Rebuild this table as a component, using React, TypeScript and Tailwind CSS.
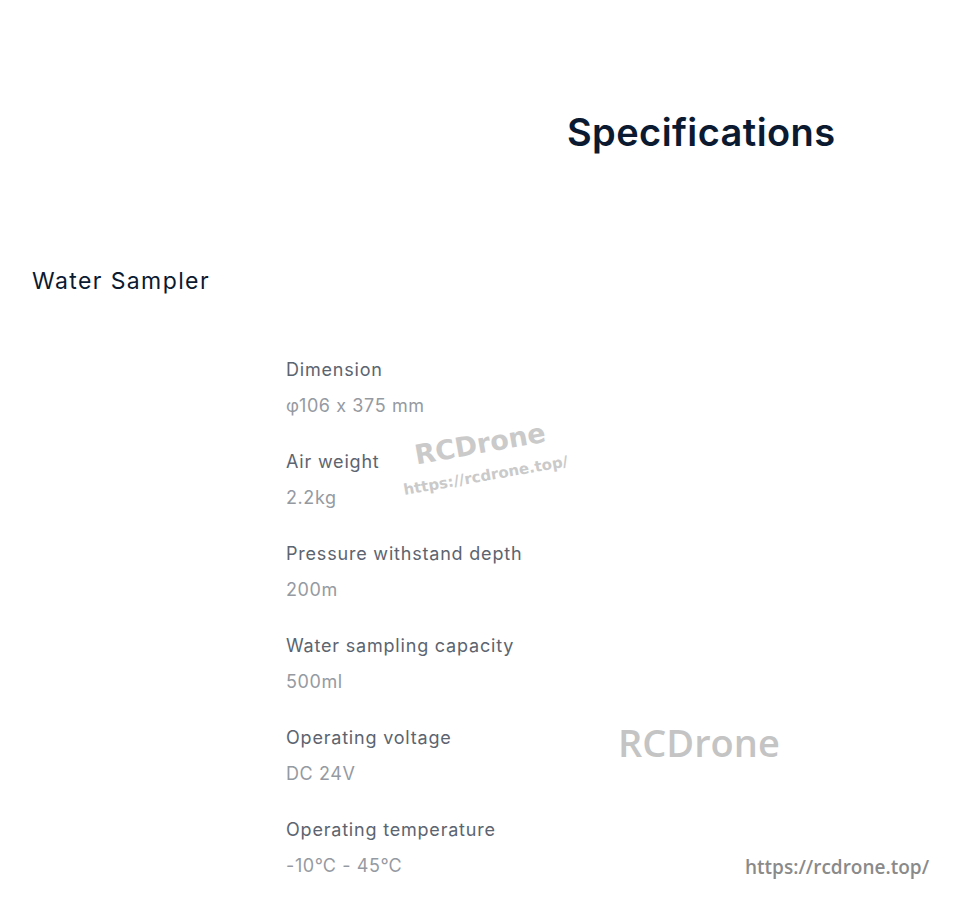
const specs = [
  { label: 'Dimension', value: 'φ106 x 375 mm' },
  { label: 'Air weight', value: '2.2kg' },
  { label: 'Pressure withstand depth', value: '200m' },
  { label: 'Water sampling capacity', value: '500ml' },
  { label: 'Operating voltage', value: 'DC 24V' },
  { label: 'Operating temperature', value: '-10℃ - 45℃' },
];

export default function App() {
  return (
    <div className="relative min-h-[912px] w-[962px] bg-white font-['Inter',sans-serif]">
      {/* heading */}
      <div className="grid grid-cols-2 pt-[104px]">
        <div />
        <h1 className="pl-[86px] text-[38px] font-semibold leading-[56px] tracking-[0.4px] text-[#0b1a30]">
          Specifications
        </h1>
      </div>

      <div className="pl-8 pt-[105px] text-[23px] leading-[32px] tracking-[1.4px] text-[#0b1a30]">Water Sampler</div>

      <div className="flex flex-col gap-[30px] pl-[286px] pt-[60px]">
        {specs.map((s) => (
          <div key={s.label} className="flex flex-col gap-[10px]">
            <div className="text-[18px] leading-[26px] tracking-[0.8px] text-[#5c6470]">{s.label}</div>
            <div className="text-[18px] leading-[26px] tracking-[0.6px] text-[#959aa2]">{s.value}</div>
          </div>
        ))}
      </div>

      {/* watermarks */}
      <div className="absolute left-[399px] top-[428px] flex -rotate-[10deg] flex-col items-center gap-[7px] font-['DejaVu_Sans',sans-serif] text-[#cacaca]">
        <span className="text-[27px] font-bold leading-[32px]">RCDrone</span>
        <span className="text-[15px] font-bold leading-[18px]">https://rcdrone.top/</span>
      </div>
      <div className="absolute left-[618px] top-[718px] font-['Open_Sans',sans-serif] text-[38px] font-semibold leading-[48px] text-[#c4c4c4]">
        RCDrone
      </div>
      <div className="absolute left-[745px] top-[853px] font-['Open_Sans',sans-serif] text-[19px] font-semibold leading-[28px] text-[#8a8a8a]">
        https://rcdrone.top/
      </div>
    </div>
  );
}
